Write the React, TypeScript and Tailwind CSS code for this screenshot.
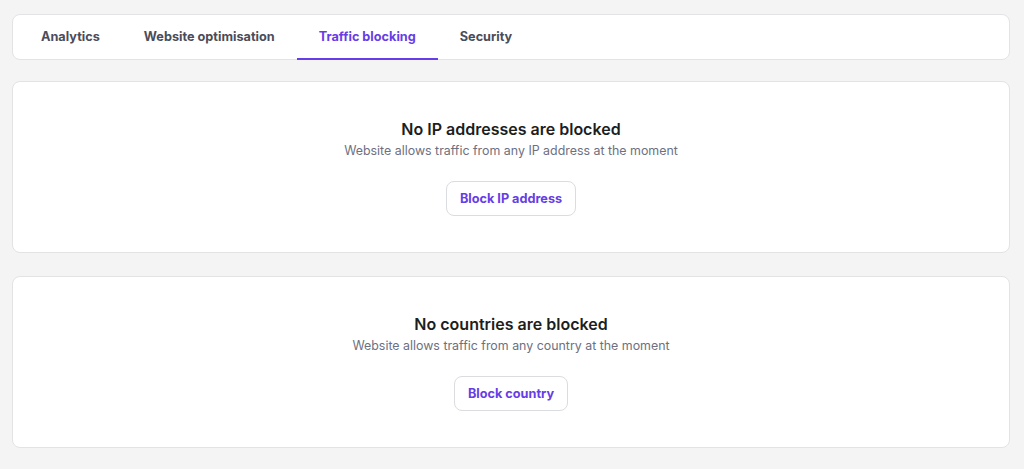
import React from "react";

const tabs = ["Analytics", "Website optimisation", "Traffic blocking", "Security"];
const active = "Traffic blocking";

function EmptyCard({ title, text, action }: { title: string; text: string; action: string }) {
  return (
    <section className="bg-white border border-[#e3e3e6] rounded-lg flex flex-col items-center pt-[35px] pb-[36px]">
      <h2 className="text-[16px] leading-6 font-semibold text-[#1d1e20]">{title}</h2>
      <p className="text-[12.4px] leading-5 text-[#6d7081]">{text}</p>
      <button className="mt-5 h-[35px] px-[13px] rounded-lg border border-[#dadce0] bg-white text-[12.7px] font-bold text-[#673de6]">
        {action}
      </button>
    </section>
  );
}

export default function App() {
  return (
    <div
      className="min-h-[469px] bg-[#f4f4f4] pt-[14px] pl-3 pr-[14px] flex flex-col"
      style={{ fontFamily: "Inter, 'Noto Sans', sans-serif" }}
    >
      {/* Tabs */}
      <nav className="bg-white border border-[#e3e3e6] rounded-lg h-[46px] flex items-stretch pl-[6px]">
        {tabs.map((t) => (
          <button
            key={t}
            className={`relative px-[22px] text-[12.7px] font-bold ${
              t === active ? "text-[#673de6]" : "text-[#4a4c5a]"
            }`}
          >
            {t}
            {t === active && (
              <span className="absolute left-0 right-0 bottom-[-1px] h-[2px] bg-[#673de6]" />
            )}
          </button>
        ))}
      </nav>

      <div className="mt-[21px] flex flex-col gap-[23px]">
        <EmptyCard
          title="No IP addresses are blocked"
          text="Website allows traffic from any IP address at the moment"
          action="Block IP address"
        />
        <EmptyCard
          title="No countries are blocked"
          text="Website allows traffic from any country at the moment"
          action="Block country"
        />
      </div>
    </div>
  );
}
